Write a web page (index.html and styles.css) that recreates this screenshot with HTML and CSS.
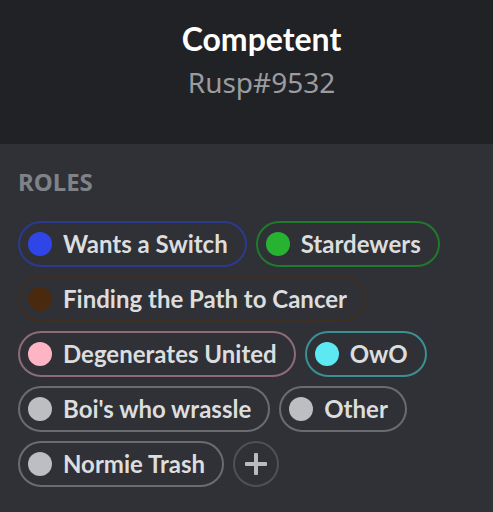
FILE: index.html
```html
<!DOCTYPE html>
<html>
<head>
<meta charset="utf-8">
<link rel="stylesheet" href="styles.css">
</head>
<body>
<div class="popout">
  <header class="head">
    <div class="name">Competent</div>
    <div class="tag">Rusp#9532</div>
  </header>
  <section class="body">
    <div class="label">ROLES</div>
    <div class="roles">
      <div class="role r-blue"><span class="dot"></span><span class="rname">Wants a Switch</span></div>
      <div class="role r-green"><span class="dot"></span><span class="rname">Stardewers</span></div>
      <div class="role r-brown"><span class="dot"></span><span class="rname">Finding the Path to Cancer</span></div>
      <div class="role r-pink"><span class="dot"></span><span class="rname">Degenerates United</span></div>
      <div class="role r-cyan"><span class="dot"></span><span class="rname">OwO</span></div>
      <div class="role r-gray"><span class="dot"></span><span class="rname">Boi's who wrassle</span></div>
      <div class="role r-gray"><span class="dot"></span><span class="rname">Other</span></div>
      <div class="role r-gray"><span class="dot"></span><span class="rname">Normie Trash</span></div>
      <div class="add"><span class="plus"></span></div>
    </div>
  </section>
</div>
</body>
</html>
```
FILE: styles.css
```css
html, body {
  margin: 0;
  padding: 0;
  background: #2f3136;
}
body {
  width: 493px;
  height: 512px;
  overflow: hidden;
  font-family: Lato, "Noto Sans", sans-serif;
}
.popout {
  display: flex;
  flex-direction: column;
}
.head {
  height: 144px;
  box-sizing: border-box;
  background: #202225;
  padding: 19px 0 0 30px;
  text-align: center;
}
.name {
  font-size: 32px;
  line-height: 40px;
  font-weight: 700;
  color: #ffffff;
}
.tag {
  margin-top: 7px;
  font-family: "Noto Sans", sans-serif;
  font-size: 28px;
  line-height: 32px;
  color: #9a9ca0;
}
.body {
  padding: 26px 18px 0 18px;
}
.label {
  font-family: "Noto Sans", sans-serif;
  font-size: 24px;
  line-height: 24px;
  font-weight: 700;
  color: #7f8287;
}
.roles {
  margin-top: 27px;
  display: flex;
  flex-wrap: wrap;
  column-gap: 9px;
  row-gap: 9px;
}
.role {
  height: 46px;
  box-sizing: border-box;
  border: 2px solid #6a6c70;
  border-radius: 23px;
  display: flex;
  align-items: center;
  padding: 0 17px 0 8px;
}
.dot {
  width: 24px;
  height: 24px;
  border-radius: 50%;
  background: #b9bbbe;
  margin-right: 11px;
  flex: none;
}
.rname {
  font-size: 24px;
  font-weight: 700;
  color: #dcddde;
  line-height: 30px;
}
.r-blue { border-color: #2b3a8e; }
.r-blue .dot { background: #3045e8; }
.r-green { border-color: #1f7a2b; }
.r-green .dot { background: #27b231; }
.r-brown { border-color: #3f2e22; }
.r-brown .dot { background: #4a2a0e; }
.r-pink { border-color: #8e6b76; }
.r-pink .dot { background: #ffb4c5; }
.r-cyan { border-color: #3b9094; }
.r-cyan .dot { background: #5ce9f1; }
.r-gray { border-color: #6a6c70; }
.r-gray .dot { background: #bcbec1; }
.add {
  width: 46px;
  height: 46px;
  box-sizing: border-box;
  border: 2px solid #4e5156;
  border-radius: 50%;
  display: flex;
  align-items: center;
  justify-content: center;
}
.plus {
  position: relative;
  width: 22px;
  height: 22px;
}
.plus::before, .plus::after {
  content: "";
  position: absolute;
  background: #b9bbbe;
  border-radius: 1px;
}
.plus::before {
  left: 0;
  top: 9px;
  width: 22px;
  height: 4px;
}
.plus::after {
  left: 9px;
  top: 0;
  width: 4px;
  height: 22px;
}
```
